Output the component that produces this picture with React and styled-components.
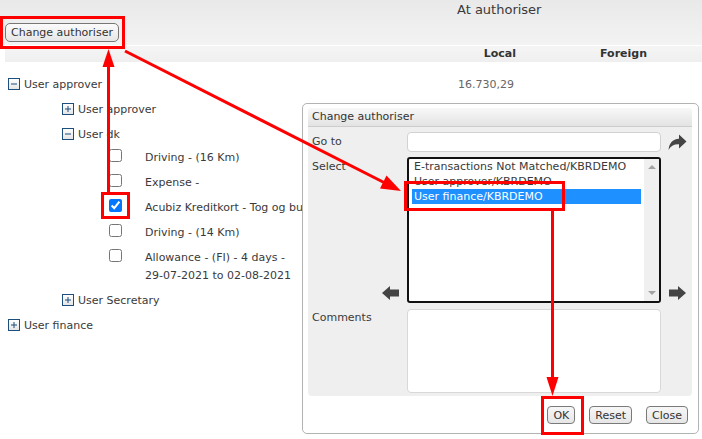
import React from "react";
import styled, { createGlobalStyle } from "styled-components";

const GlobalStyle = createGlobalStyle`
  html, body {
    margin: 0;
    padding: 0;
    background: #fff;
  }
  body {
    font-family: "DejaVu Sans", Verdana, sans-serif;
    font-size: 11px;
    color: #3a3a3a;
  }
`;

const ExpandIcon = ({ open }) => (
  <svg width="12" height="12" viewBox="0 0 12 12">
    <defs>
      <linearGradient id="expGrad" x1="0" y1="0" x2="0" y2="1">
        <stop offset="0" stopColor="#ffffff" />
        <stop offset="1" stopColor="#e4e4e4" />
      </linearGradient>
    </defs>
    <rect x="0.5" y="0.5" width="11" height="11" fill="url(#expGrad)" stroke="#1d4f7e" />
    <rect x="3" y="5.5" width="6" height="1" fill="#1d4f7e" />
    {!open && <rect x="5.5" y="3" width="1" height="6" fill="#1d4f7e" />}
  </svg>
);

const RedoIcon = () => (
  <svg width="19" height="17" viewBox="0 0 19 17">
    <path
      d="M11 0.5 L18.5 7.5 L11 14.5 L11 10.2 C6 10 2.5 11.8 0.5 16 C1 9.5 4.5 5.3 11 4.8 Z"
      fill="#444"
    />
  </svg>
);

const BlockArrow = ({ dir }) => (
  <svg width="17" height="14" viewBox="0 0 17 14">
    <path
      d="M0 7 L8 0 L8 3.5 L17 3.5 L17 10.5 L8 10.5 L8 14 Z"
      fill="#444"
      transform={dir === "right" ? "translate(17 0) scale(-1 1)" : undefined}
    />
  </svg>
);

class App extends React.Component {
  render() {
    return (
      <Page>
        <GlobalStyle />
        <TopBar>
          <Title>At authoriser</Title>
          <GreyButton>Change authoriser</GreyButton>
        </TopBar>
        <HeaderBand>
          <HeadCell width="511px">Local</HeadCell>
          <HeadCell width="130px" indent="84px">Foreign</HeadCell>
          <HeadCell width="40px" indent="0">Sum</HeadCell>
        </HeaderBand>

        <Tree>
          <GroupRow>
            <ExpandIcon open />
            <span>User approver</span>
            <Amount>16.730,29</Amount>
          </GroupRow>
          <SubRow>
            <ExpandIcon />
            <span>User approver</span>
          </SubRow>
          <SubRow>
            <ExpandIcon open />
            <span>User dk</span>
          </SubRow>
          <Items>
            <ItemRow>
              <Check type="checkbox" readOnly />
              <ItemText>Driving - (16 Km)</ItemText>
            </ItemRow>
            <ItemRow>
              <Check type="checkbox" readOnly />
              <ItemText>Expense -</ItemText>
            </ItemRow>
            <ItemRow>
              <Check type="checkbox" readOnly checked />
              <ItemText>Acubiz Kreditkort - Tog og bus</ItemText>
            </ItemRow>
            <ItemRow>
              <Check type="checkbox" readOnly />
              <ItemText>Driving - (14 Km)</ItemText>
            </ItemRow>
            <ItemRow>
              <Check type="checkbox" readOnly />
              <ItemText>
                Allowance - (FI) - 4 days - <NoWrap>29-07-2021</NoWrap> to{" "}
                <NoWrap>02-08-2021</NoWrap>
              </ItemText>
            </ItemRow>
          </Items>
          <SubRow>
            <ExpandIcon />
            <span>User Secretary</span>
          </SubRow>
          <GroupRow>
            <ExpandIcon />
            <span>User finance</span>
          </GroupRow>
        </Tree>

        <Dialog>
          <Panel>
            <PanelTitle>Change authoriser</PanelTitle>
            <Form>
              <Label>Go to</Label>
              <TextBox />
              <IconCell align="center">
                <RedoIcon />
              </IconCell>

              <LabelStack>
                <Label pad="3px">Select</Label>
                <ArrowSlot>
                  <BlockArrow dir="left" />
                </ArrowSlot>
              </LabelStack>
              <ListBox>
                <Options>
                  <Option>E-transactions Not Matched/KBRDEMO</Option>
                  <Option>User approver/KBRDEMO</Option>
                  <Option selected>User finance/KBRDEMO</Option>
                </Options>
                <ScrollTrack>
                  <Tri up />
                  <Tri />
                </ScrollTrack>
              </ListBox>
              <IconCell align="flex-end">
                <ArrowSlot>
                  <BlockArrow dir="right" />
                </ArrowSlot>
              </IconCell>

              <Label pad="2px">Comments</Label>
              <CommentBox />
              <span />
            </Form>
          </Panel>
          <Footer>
            <SmallButton>OK</SmallButton>
            <SmallButton>Reset</SmallButton>
            <SmallButton>Close</SmallButton>
          </Footer>
        </Dialog>

        <Overlay viewBox="0 0 702 439">
          <g fill="none" stroke="#f00" strokeWidth="3">
            <rect x="1.5" y="17.5" width="122" height="30" />
            <rect x="102.5" y="193.5" width="26" height="24" />
            <rect x="405.5" y="182.5" width="158" height="27" />
            <rect x="542.5" y="397.5" width="40" height="36" />
            <line x1="108.5" y1="192" x2="108.5" y2="64" />
            <line x1="125" y1="51" x2="384" y2="182.5" />
            <line x1="552.5" y1="211" x2="552.5" y2="379" />
          </g>
          <g fill="#f00">
            <polygon points="108.5,49 102.5,67 114.5,67" />
            <polygon points="401,191 380,188.5 386.5,175.5" />
            <polygon points="552.5,396 546.5,377 558.5,377" />
          </g>
        </Overlay>
      </Page>
    );
  }
}

const Page = styled.div`
  position: relative;
  width: 702px;
  height: 439px;
  overflow: hidden;
  background: #fff;
`;

const TopBar = styled.div`
  height: 45px;
  box-sizing: border-box;
  padding-top: 2px;
  display: flex;
  flex-direction: column;
  align-items: flex-start;
  background: linear-gradient(#e9e9e9, #f3f3f3);
`;

const Title = styled.div`
  padding-left: 457px;
  font-size: 13px;
  line-height: 16px;
  color: #3a3a3a;
`;

const GreyButton = styled.button`
  margin: 5px 0 0 5px;
  height: 19px;
  padding: 0 5px;
  border: 1px solid #777;
  border-radius: 5px;
  background: linear-gradient(#fbfbfb, #e6e6e6);
  font-family: inherit;
  font-size: 11px;
  color: #333;
  line-height: 16px;
`;

const HeaderBand = styled.div`
  margin-left: 5px;
  height: 17px;
  box-sizing: border-box;
  border-top: 1px solid #fff;
  background: linear-gradient(#f5f5f5, #efefef);
  display: flex;
  white-space: nowrap;
`;

const HeadCell = styled.div`
  flex: none;
  width: ${props => props.width};
  margin-left: ${props => props.indent || 0};
  text-align: ${props => (props.indent ? "left" : "right")};
  font-weight: bold;
  line-height: 16px;
  color: #333;
  &:last-child {
    text-align: left;
    margin-left: 54px;
  }
`;

const Tree = styled.div`
  padding-top: 10px;
`;

const Row = styled.div`
  display: flex;
  align-items: center;
  gap: 4px;
  padding: 4px 0 3px;
  line-height: 18px;
  white-space: nowrap;

  & > svg {
    flex: none;
    margin-top: -2px;
  }
`;

const GroupRow = styled(Row)`
  width: 514px;
  padding-left: 8px;
  box-sizing: border-box;
`;

const SubRow = styled(Row)`
  padding-left: 62px;
`;

const Amount = styled.span`
  margin-left: auto;
  color: #666;
`;

const Items = styled.div`
  margin-top: -2px;
`;

const ItemRow = styled.div`
  display: flex;
  align-items: flex-start;
  padding: 4px 0 3px 109px;
  line-height: 18px;
`;

const Check = styled.input`
  flex: none;
  width: 13px;
  height: 13px;
  margin: 0 23px 0 0;
`;

const ItemText = styled.div`
  width: 200px;
  margin-top: -4px;
  padding-top: 4px;
`;

const NoWrap = styled.span`
  white-space: nowrap;
`;

const Dialog = styled.div`
  position: absolute;
  left: 302px;
  top: 103px;
  width: 397px;
  height: 331px;
  box-sizing: border-box;
  padding: 4px 6px 0 5px;
  border: 1px solid #b3b3b3;
  border-radius: 5px;
  background: #fff;
`;

const Panel = styled.div`
  background: #efefef;
  border-radius: 4px;
`;

const PanelTitle = styled.div`
  height: 19px;
  box-sizing: border-box;
  padding-left: 4px;
  line-height: 18px;
  border-bottom: 1px solid #cdcdcd;
  border-radius: 4px 4px 0 0;
  background: linear-gradient(#f8f8f8, #e3e3e3);
  color: #333;
`;

const Form = styled.div`
  display: grid;
  grid-template-columns: 95px 254px 1fr;
  grid-template-rows: 20px 146px 84px;
  row-gap: 5px;
  padding: 5px 0 4px 4px;

  & > :nth-child(7),
  & > :nth-child(8) {
    margin-top: 1px;
  }
`;

const Label = styled.div`
  line-height: 14px;
  padding-top: ${props => props.pad || "0"};
  align-self: ${props => (props.pad ? "start" : "center")};
  color: #3a3a3a;
`;

const LabelStack = styled.div`
  display: flex;
  flex-direction: column;
  justify-content: space-between;
`;

const ArrowSlot = styled.div`
  display: flex;
  justify-content: flex-end;
  margin: 0 8px 3px 0;
  height: 14px;
`;

const IconCell = styled.div`
  display: flex;
  align-items: ${props => props.align};
  padding-left: 7px;

  & ${ArrowSlot} {
    margin: 0 0 3px 1px;
  }
`;

const TextBox = styled.div`
  box-sizing: border-box;
  background: #fff;
  border: 1px solid #d2d2d2;
  border-radius: 4px;
`;

const CommentBox = styled(TextBox)`
  height: 84px;
  border-color: #d8d8d8;
`;

const ListBox = styled.div`
  display: flex;
  box-sizing: border-box;
  background: #fff;
  border: 2px solid #111;
  border-radius: 3px;
  overflow: hidden;
`;

const Options = styled.div`
  flex: 1;
  padding: 0 3px;
`;

const Option = styled.div`
  padding-left: 2px;
  line-height: 15px;
  white-space: nowrap;
  background: ${props => (props.selected ? "#1e90ff" : "transparent")};
  color: ${props => (props.selected ? "#fff" : "#3a3a3a")};
`;

const ScrollTrack = styled.div`
  width: 15px;
  background: #f0f0f0;
  display: flex;
  flex-direction: column;
  justify-content: space-between;
  align-items: center;
  padding: 6px 0;
`;

const Tri = styled.div`
  width: 0;
  height: 0;
  border-left: 4px solid transparent;
  border-right: 4px solid transparent;
  border-bottom: ${props => (props.up ? "4px solid #a3a3a3" : "0")};
  border-top: ${props => (props.up ? "0" : "4px solid #a3a3a3")};
`;

const Footer = styled.div`
  display: flex;
  justify-content: flex-end;
  gap: 14px;
  padding: 10px 4px 0 0;
`;

const SmallButton = styled.button`
  height: 18px;
  padding: 0 5px;
  border: 1px solid #7a7a7a;
  border-radius: 4px;
  background: linear-gradient(#f7f7f7, #e6e6e6);
  font-family: inherit;
  font-size: 11px;
  line-height: 15px;
  color: #333;
`;

const Overlay = styled.svg`
  position: absolute;
  left: 0;
  top: 0;
  width: 702px;
  height: 439px;
  pointer-events: none;
`;

export default App;
